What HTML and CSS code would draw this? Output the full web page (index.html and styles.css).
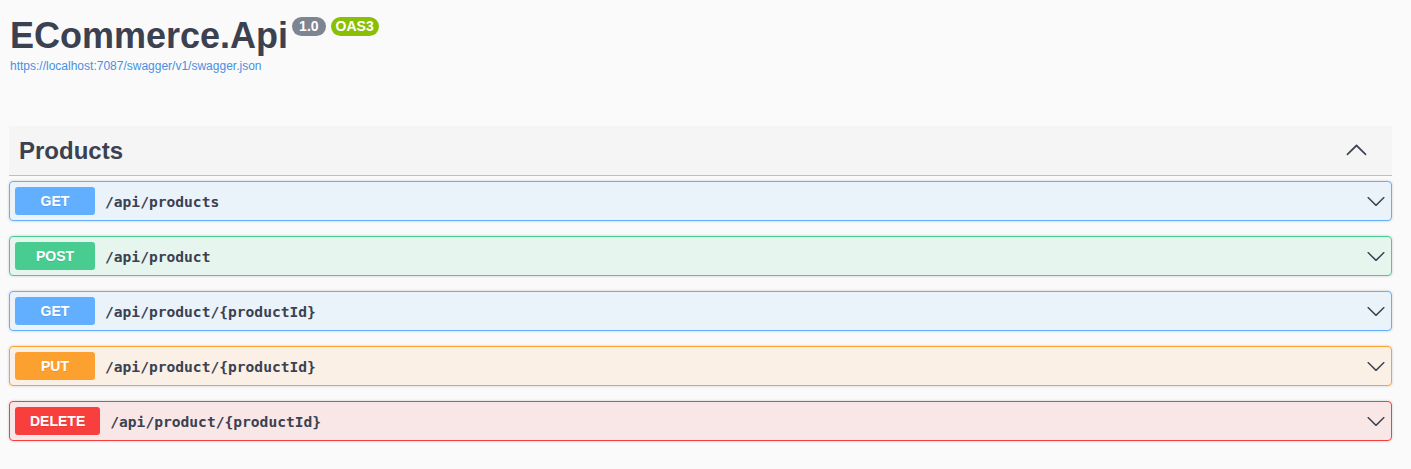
FILE: index.html
```html
<!DOCTYPE html>
<html lang="en">
<head>
<meta charset="utf-8">
<title>ECommerce.Api</title>
<link rel="stylesheet" href="styles.css">
</head>
<body>
<div class="wrapper">
  <div class="info">
    <div class="title-row">
      <h2 class="title">ECommerce.Api</h2>
      <span class="badge badge-version">1.0</span>
      <span class="badge badge-oas">OAS3</span>
    </div>
    <a class="base-url" href="#">https://localhost:7087/swagger/v1/swagger.json</a>
  </div>

  <section class="tag-section">
    <div class="tag-header">
      <h3 class="tag-name">Products</h3>
      <svg class="arrow-up" viewBox="0 0 20 20" aria-hidden="true"><path d="M17.418 6.109c.272-.268.709-.268.979 0s.271.701 0 .969l-7.908 7.83c-.27.268-.707.268-.979 0l-7.908-7.830c-.27-.268-.27-.701 0-.969.271-.268.709-.268.979 0L10 13.25l7.418-7.141z" transform="rotate(180 10 10)"/></svg>
    </div>

    <div class="opblock op-get">
      <span class="method">GET</span>
      <span class="path">/api/products</span>
      <svg class="arrow-down" viewBox="0 0 20 20" aria-hidden="true"><path d="M17.418 6.109c.272-.268.709-.268.979 0s.271.701 0 .969l-7.908 7.83c-.27.268-.707.268-.979 0l-7.908-7.83c-.27-.268-.27-.701 0-.969.271-.268.709-.268.979 0L10 13.25l7.418-7.141z"/></svg>
    </div>
    <div class="opblock op-post">
      <span class="method">POST</span>
      <span class="path">/api/product</span>
      <svg class="arrow-down" viewBox="0 0 20 20" aria-hidden="true"><path d="M17.418 6.109c.272-.268.709-.268.979 0s.271.701 0 .969l-7.908 7.83c-.27.268-.707.268-.979 0l-7.908-7.83c-.27-.268-.27-.701 0-.969.271-.268.709-.268.979 0L10 13.25l7.418-7.141z"/></svg>
    </div>
    <div class="opblock op-get">
      <span class="method">GET</span>
      <span class="path">/api/product/{productId}</span>
      <svg class="arrow-down" viewBox="0 0 20 20" aria-hidden="true"><path d="M17.418 6.109c.272-.268.709-.268.979 0s.271.701 0 .969l-7.908 7.83c-.27.268-.707.268-.979 0l-7.908-7.83c-.27-.268-.27-.701 0-.969.271-.268.709-.268.979 0L10 13.25l7.418-7.141z"/></svg>
    </div>
    <div class="opblock op-put">
      <span class="method">PUT</span>
      <span class="path">/api/product/{productId}</span>
      <svg class="arrow-down" viewBox="0 0 20 20" aria-hidden="true"><path d="M17.418 6.109c.272-.268.709-.268.979 0s.271.701 0 .969l-7.908 7.83c-.27.268-.707.268-.979 0l-7.908-7.83c-.27-.268-.27-.701 0-.969.271-.268.709-.268.979 0L10 13.25l7.418-7.141z"/></svg>
    </div>
    <div class="opblock op-delete">
      <span class="method">DELETE</span>
      <span class="path">/api/product/{productId}</span>
      <svg class="arrow-down" viewBox="0 0 20 20" aria-hidden="true"><path d="M17.418 6.109c.272-.268.709-.268.979 0s.271.701 0 .969l-7.908 7.83c-.27.268-.707.268-.979 0l-7.908-7.83c-.27-.268-.27-.701 0-.969.271-.268.709-.268.979 0L10 13.25l7.418-7.141z"/></svg>
    </div>
  </section>
</div>
</body>
</html>
```

FILE: styles.css
```css
* { box-sizing: border-box; }

body {
  margin: 0;
  background: #fafafa;
  font-family: "Liberation Sans", Arial, sans-serif;
  color: #3b4151;
}

.wrapper {
  padding: 0 19px 0 9px;
}

.info {
  padding-top: 16px;
  padding-left: 1px;
}

.title-row {
  display: flex;
  align-items: flex-start;
}

.title {
  margin: 0;
  font-size: 36px;
  line-height: 40px;
  font-weight: 700;
  color: #3b4151;
}

.badge {
  margin-top: 1px;
  height: 19px;
  line-height: 19px;
  border-radius: 57px;
  color: #fff;
  font-size: 14px;
  font-weight: 700;
}

.badge-version {
  margin-left: 4px;
  padding: 0 7px;
  background: #7d8492;
}

.badge-oas {
  margin-left: 5px;
  padding: 0 5px;
  background: #89bf04;
}

.base-url {
  display: block;
  margin-top: 3px;
  font-size: 12px;
  line-height: 14px;
  color: #4990e2;
  text-decoration: none;
}

.tag-section {
  margin-top: 53px;
}

.tag-header {
  display: flex;
  align-items: center;
  justify-content: space-between;
  height: 50px;
  padding: 0 24px 0 10px;
  margin-bottom: 5px;
  background: #f5f5f5;
  border-bottom: 1px solid rgba(59, 65, 81, 0.3);
}

.tag-name {
  margin: 0;
  font-size: 24px;
  font-weight: 700;
  color: #3b4151;
}

.arrow-up {
  width: 23px;
  height: 23px;
  fill: #3b4151;
}

.opblock {
  display: flex;
  align-items: center;
  height: 40px;
  padding: 0 5px;
  margin-bottom: 15px;
  border: 1px solid;
  border-radius: 4px;
  box-shadow: 0 0 3px rgba(0, 0, 0, 0.19);
}

.method {
  min-width: 80px;
  padding: 6px 15px;
  border-radius: 3px;
  font-size: 14px;
  line-height: 16px;
  font-weight: 700;
  text-align: center;
  color: #fff;
  text-shadow: 0 1px 0 rgba(0, 0, 0, 0.1);
}

.path {
  flex: 1;
  padding: 0 10px;
  font-family: "DejaVu Sans Mono", "Liberation Mono", monospace;
  font-size: 14.6px;
  font-weight: 700;
  color: #3b4151;
}

.arrow-down {
  width: 20px;
  height: 20px;
  fill: #3b4151;
}

.op-get { border-color: #61affe; background: rgba(97, 175, 254, 0.1); }
.op-get .method { background: #61affe; }

.op-post { border-color: #49cc90; background: rgba(73, 204, 144, 0.1); }
.op-post .method { background: #49cc90; }

.op-put { border-color: #fca130; background: rgba(252, 161, 48, 0.1); }
.op-put .method { background: #fca130; }

.op-delete { border-color: #f93e3e; background: rgba(249, 62, 62, 0.1); }
.op-delete .method { background: #f93e3e; }
```
